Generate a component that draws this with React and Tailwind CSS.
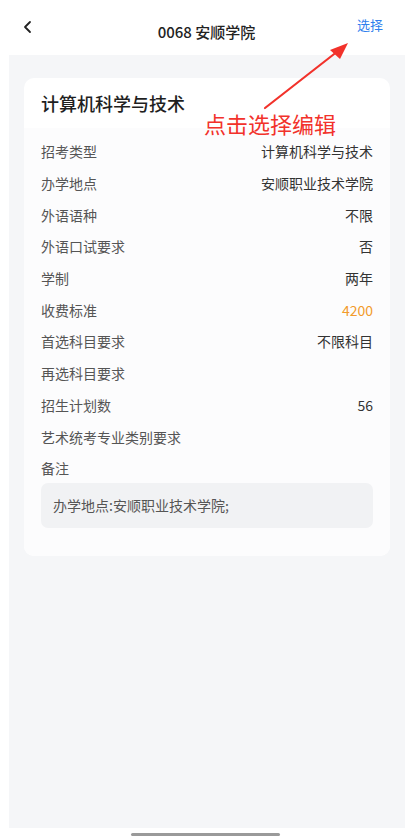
const FONT = { fontFamily: '"Noto Sans CJK SC", "Noto Sans", sans-serif' }

const ROWS = [
  { label: '招考类型', value: '计算机科学与技术' },
  { label: '办学地点', value: '安顺职业技术学院' },
  { label: '外语语种', value: '不限' },
  { label: '外语口试要求', value: '否' },
  { label: '学制', value: '两年' },
  { label: '收费标准', value: '4200', accent: true },
  { label: '首选科目要求', value: '不限科目' },
  { label: '再选科目要求', value: '' },
  { label: '招生计划数', value: '56' },
  { label: '艺术统考专业类别要求', value: '' },
]

export default function App() {
  return (
    <div className="relative w-[413px] h-[836px] bg-white overflow-hidden" style={FONT}>
      {/* 顶部导航 */}
      <div className="h-[55px] flex items-center px-[22px] relative">
        <svg width="12" height="14" viewBox="0 0 12 14" className="mt-[-2px]">
          <path d="M8 2 L3 7 L8 12" fill="none" stroke="#222" strokeWidth="1.8" strokeLinecap="round" strokeLinejoin="round" />
        </svg>
        <div className="absolute left-0 right-0 top-[21px] text-center text-[15px] font-medium text-[#222] leading-[22px]">0068 安顺学院</div>
        <div className="ml-auto mt-[-6px] mr-[8px] text-[13px] text-[#2f80ed]">选择</div>
      </div>

      {/* 内容区 */}
      <div className="mx-[9px] w-[396px] h-[773px] bg-[#f5f6f8] pt-[23px] px-[15px]">
        <div className="bg-white rounded-[10px] overflow-hidden">
          <div className="h-[50px] flex items-center px-[17px] pt-[1px] text-[18px] font-medium text-[#1f1f1f]">计算机科学与技术</div>
          <div className="bg-[#fcfcfd] px-[17px] pt-[8px] pb-[28px]">
            {ROWS.map((r) => (
              <div key={r.label} className="h-[31.7px] flex items-center justify-between text-[14px]">
                <span className="text-[#555]">{r.label}</span>
                <span className={r.accent ? 'text-[#f29b2c]' : 'text-[#333]'}>{r.value}</span>
              </div>
            ))}
            <div className="h-[31.7px] flex items-center text-[14px] text-[#555]">备注</div>
            <div className="mt-[-2px] h-[45px] rounded-[7px] bg-[#f1f2f4] flex items-center px-[12px] text-[14px] text-[#555]">办学地点:安顺职业技术学院;</div>
          </div>
        </div>
      </div>

      {/* 底部指示条 */}
      <div className="absolute left-[131px] top-[833px] w-[149px] h-[3px] bg-[#9a9a9a] rounded-full" />

      {/* 标注 */}
      <svg className="absolute left-0 top-0" width="413" height="140" viewBox="0 0 413 140">
        <line x1="265" y1="108" x2="338" y2="51" stroke="#f2322b" strokeWidth="2.2" strokeLinecap="round" />
        <polygon points="348,43 330,50 340,59" fill="#f2322b" />
      </svg>
      <div className="absolute left-[204px] top-[108px] text-[22px] leading-[30px] text-[#f2322b]">点击选择编辑</div>
    </div>
  )
}
